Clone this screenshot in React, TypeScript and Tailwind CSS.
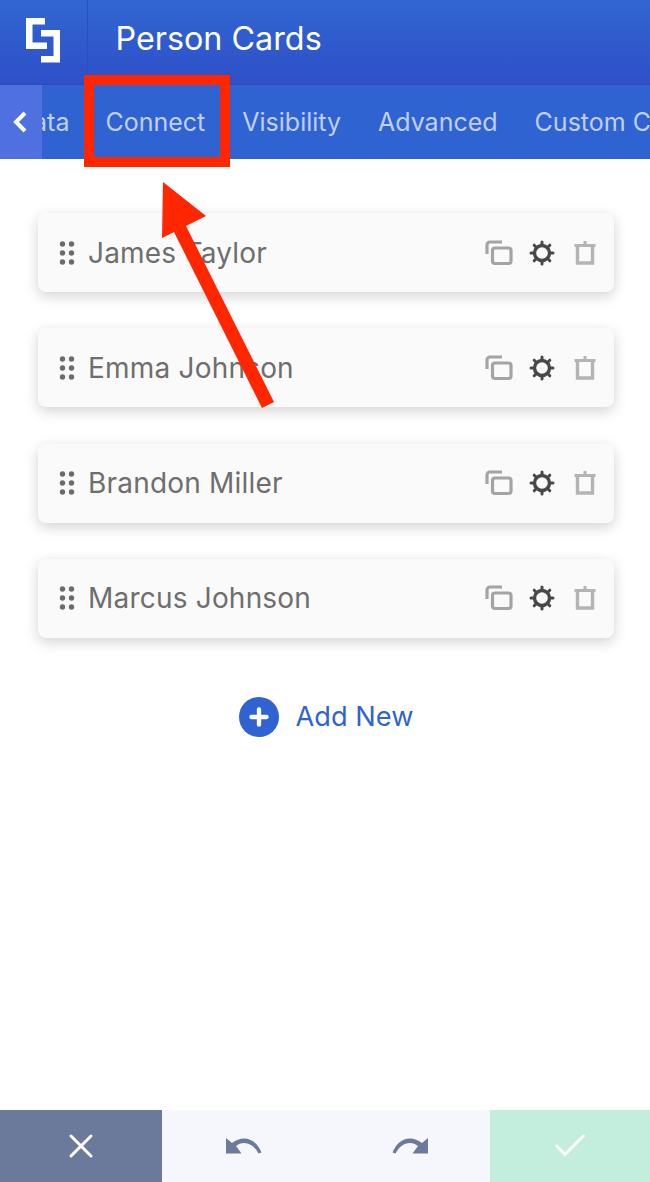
import { X, Check, Plus } from 'lucide-react';

const TABS = ['Data', 'Connect', 'Visibility', 'Advanced', 'Custom CSS'];
const PEOPLE = ['James Taylor', 'Emma Johnson', 'Brandon Miller', 'Marcus Johnson'];

function Logo() {
  return (
    <svg width="36" height="46" viewBox="0 0 36 46" fill="#fff">
      <path d="M0 0h19v6.500H6.500V24.500H21V31H0z" />
      <path d="M34 44.500H15V38H27.500V18.500H15V12H34z" />
    </svg>
  );
}

function GripIcon() {
  return (
    <svg width="16" height="24" viewBox="0 0 16 24" fill="#6b6b6b">
      {[3, 12, 21].map((y) => (
        <g key={y}>
          <circle cx="3.500" cy={y} r="2.700" />
          <circle cx="12.500" cy={y} r="2.700" />
        </g>
      ))}
    </svg>
  );
}

function CopyIcon() {
  return (
    <svg width="28" height="26" viewBox="0 0 28 26" fill="none" stroke="#a4a4a4" strokeWidth="3.200">
      <rect x="7.500" y="8" width="18.500" height="15.500" rx="2.500" />
      <path d="M2 14V5a3 3 0 0 1 3-3h12" />
    </svg>
  );
}

function GearIcon() {
  return (
    <svg width="26" height="26" viewBox="0 0 26 26" fill="none" stroke="#484848">
      <circle cx="13" cy="13" r="7.500" strokeWidth="3.400" />
      <path
        d="M13 2v2.500M13 21.500V24M2 13h2.500M21.500 13H24M5.200 5.200l1.800 1.800M19 19l1.800 1.800M5.200 20.800L7 19M19 7l1.800-1.800"
        strokeWidth="3"
        strokeLinecap="round"
      />
    </svg>
  );
}

function TrashIcon() {
  return (
    <svg width="22" height="26" viewBox="0 0 22 26" fill="none" stroke="#b4b4b4">
      <path d="M3.500 6v17h15V6" strokeWidth="3.400" />
      <path d="M0.500 5.500h21" strokeWidth="3" />
      <path d="M11 1v3" strokeWidth="3" />
    </svg>
  );
}

function UndoIcon({ flip }: { flip?: boolean }) {
  return (
    <svg width="36" height="16" viewBox="0 0 36 16" fill="#6b7a9b" className={flip ? '-scale-x-100' : ''}>
      <path d="M0 0L6 5C10 2 14 .5 18 .5C26 .5 32 6 35.500 14.500L32.500 15.500C29 9 24 5 18 5C15 5 12.500 6 10 8L15.500 15.500H0Z" />
    </svg>
  );
}

function PersonCard({ name }: { name: string }) {
  return (
    <div className="flex h-[79px] items-center rounded-lg bg-[#fafafa] pl-[21px] pr-[18px] shadow-[0_4px_14px_rgba(0,0,0,0.18)]">
      <GripIcon />
      <span className="ml-[13px] flex-1 text-[28px] tracking-[0.2px] text-[#6e6e6e]">{name}</span>
      <div className="flex items-center">
        <CopyIcon />
        <span className="ml-[16px] flex">
          <GearIcon />
        </span>
        <span className="ml-[19px] flex">
          <TrashIcon />
        </span>
      </div>
    </div>
  );
}

export default function App() {
  return (
    <div className="relative flex h-[1182px] w-[650px] flex-col overflow-hidden bg-white font-['Inter',sans-serif]">
      <header className="flex h-[85px] shrink-0 border-b border-[#2c4bb8] bg-gradient-to-b from-[#3166d1] to-[#2e4fc8]">
        <div className="flex w-[88px] shrink-0 items-center border-r border-[#2c4fbb] pl-[26px] pb-[2px]">
          <Logo />
        </div>
        <h1 className="ml-[27.500px] self-center pb-[6px] text-[32.300px] text-white">Person Cards</h1>
      </header>

      <nav className="relative flex h-[74px] shrink-0 items-center overflow-hidden bg-[#3063d2]">
        <div className="ml-[-3.500px] mt-[2px] flex whitespace-nowrap">
          {TABS.map((t, i) => (
            <span key={t} className={`px-[18.500px] text-[25px] text-[#c0cff2] ${i === 0 ? 'mr-[-1px]' : ''}`}>
              {t}
            </span>
          ))}
        </div>
        <div className="absolute inset-y-0 left-0 flex w-[42px] items-center bg-[#4f70df] pl-[13px]">
          <svg width="14" height="22" viewBox="0 0 14 22" fill="none" stroke="#fff" strokeWidth="4">
            <path d="M12 2L3 11l9 9" />
          </svg>
        </div>
      </nav>

      <main className="flex flex-1 flex-col pl-[38px] pr-[36px] pt-[54px]">
        <div className="flex flex-col gap-[36.300px]">
          {PEOPLE.map((p) => (
            <PersonCard key={p} name={p} />
          ))}
        </div>
        <div className="mt-[59px] flex items-center justify-center gap-[17px]">
          <span className="flex h-[40px] w-[40px] items-center justify-center rounded-full bg-[#3063d2]">
            <Plus size={26} strokeWidth={4} color="#fff" />
          </span>
          <span className="text-[27.200px] text-[#3063d2]">Add New</span>
        </div>
      </main>

      <footer className="flex h-[72px] shrink-0">
        <div className="flex w-[162px] items-center justify-center bg-[#6b7a9b]">
          <X size={40} strokeWidth={1.800} color="#fff" />
        </div>
        <div className="flex flex-1 items-center justify-between bg-[#f5f7fc] pl-[64px] pr-[62px]">
          <UndoIcon />
          <UndoIcon flip />
        </div>
        <div className="flex w-[160px] items-center justify-center bg-[#c3eedd]">
          <Check size={40} strokeWidth={1.800} color="#fff" />
        </div>
      </footer>

      {/* annotation over the screenshot */}
      <div className="absolute left-[84px] top-[75px] h-[92px] w-[146px] border-[10px] border-[#ff2600]" />
      <svg className="absolute left-0 top-0" width="650" height="1182" fill="#ff2600">
        <path d="M163 182L206 216L186 226L274 402L262 408L174 232L162 238Z" />
      </svg>
    </div>
  );
}
